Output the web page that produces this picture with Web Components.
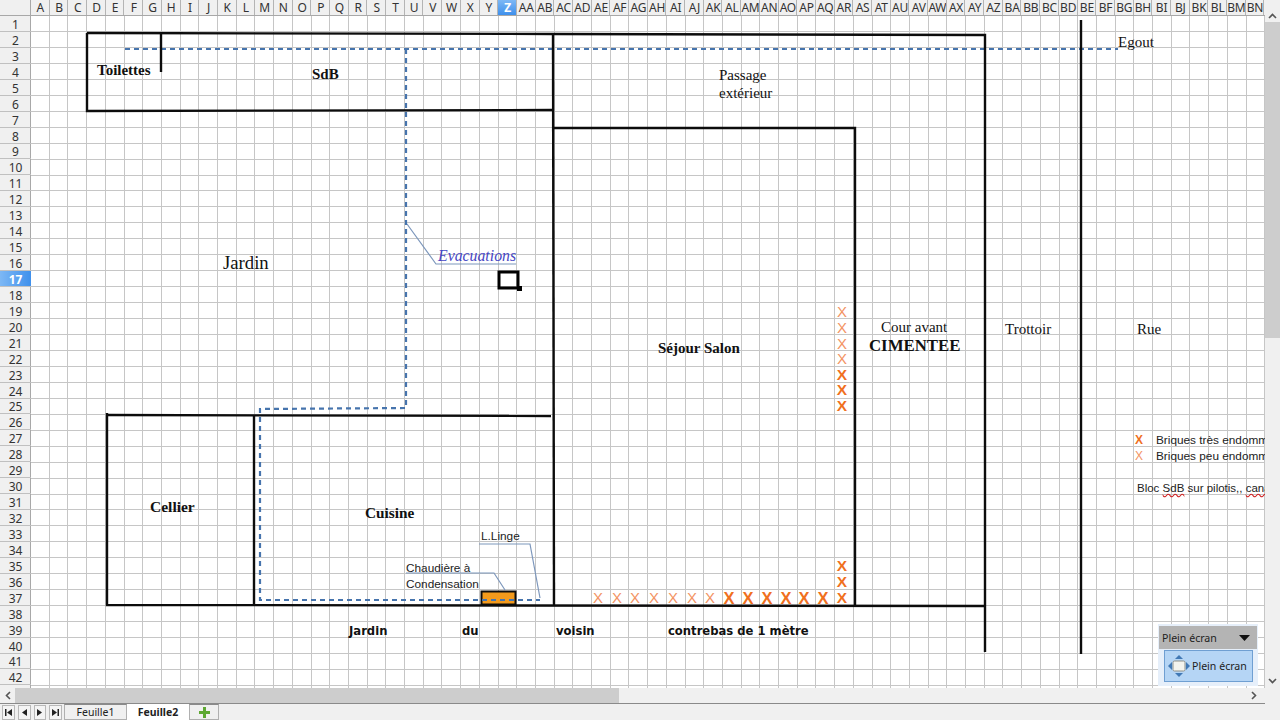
<!DOCTYPE html>
<html lang="fr">
<head>
<meta charset="utf-8">
<title>Feuille2</title>
<style>
  html, body { margin: 0; padding: 0; overflow: hidden; background: #f0f0f0; }
  .serif { font-family: "Liberation Serif", serif; color: #111; }
  .sans { font-family: "Liberation Sans", sans-serif; color: #222; }
  .wide { font: bold 11.6px "DejaVu Sans", sans-serif; color: #111; }
</style>
</head>
<body>
<calc-app>
  <sheet-label class="serif" x="97" y="70" style="font-size:15px;font-weight:bold">Toilettes</sheet-label>
  <sheet-label class="serif" x="312" y="74" style="font-size:15px;font-weight:bold">SdB</sheet-label>
  <sheet-label class="serif" x="719" y="75" style="font-size:15px">Passage</sheet-label>
  <sheet-label class="serif" x="719" y="93" style="font-size:15px">extérieur</sheet-label>
  <sheet-label class="serif" x="223" y="263" style="font-size:18.7px">Jardin</sheet-label>
  <sheet-label class="serif" x="438" y="256" style="font-size:15.8px;font-style:italic;color:#4646c4">Evacuations</sheet-label>
  <sheet-label class="serif" x="658" y="348" style="font-size:15px;font-weight:bold">Séjour Salon</sheet-label>
  <sheet-label class="serif" x="881" y="327" style="font-size:15px">Cour avant</sheet-label>
  <sheet-label class="serif" x="869" y="346" style="font-size:16.8px;font-weight:bold">CIMENTEE</sheet-label>
  <sheet-label class="serif" x="1005" y="329" style="font-size:15px">Trottoir</sheet-label>
  <sheet-label class="serif" x="1137" y="329" style="font-size:15px">Rue</sheet-label>
  <sheet-label class="serif" x="1118" y="42" style="font-size:15px">Egout</sheet-label>
  <sheet-label class="serif" x="150" y="507" style="font-size:15.5px;font-weight:bold">Cellier</sheet-label>
  <sheet-label class="serif" x="365" y="513" style="font-size:15.3px;font-weight:bold">Cuisine</sheet-label>
  <sheet-label class="wide" x="349" y="632">Jardin</sheet-label>
  <sheet-label class="wide" x="462" y="632">du</sheet-label>
  <sheet-label class="wide" x="556" y="632">voisin</sheet-label>
  <sheet-label class="wide" x="668" y="632">contrebas de 1 mètre</sheet-label>
  <sheet-label class="sans" x="481" y="536" style="font-size:11.8px">L.Linge</sheet-label>
  <sheet-label class="sans" x="406" y="568" style="font-size:11.8px">Chaudière à</sheet-label>
  <sheet-label class="sans" x="406" y="584" style="font-size:11.8px">Condensation</sheet-label>
  <sheet-label class="sans" x="1156" y="440" style="font-size:11.8px">Briques très endommagées</sheet-label>
  <sheet-label class="sans" x="1156" y="456" style="font-size:11.8px">Briques peu endommagées</sheet-label>
  <sheet-label class="sans" x="1137" y="488" style="font-size:11.5px">Bloc <u style="text-decoration:underline wavy #d02020">SdB</u> sur pilotis,, <u style="text-decoration:underline wavy #d02020">canalisation</u></sheet-label>
</calc-app>

<script>
  const COL_W = 18.7;
  const ROW_H = 15.95;
  // colonnes A..Z, AA..AZ puis BA..BN
  const colLabel = i => i < 26 ? String.fromCharCode(65 + i)
    : (i < 52 ? 'A' : 'B') + String.fromCharCode(65 + (i % 26));

  class ColHeaders extends HTMLElement {
    constructor() {
      super();
      this.attachShadow({ mode: 'open' });
      let cells = '';
      for (let i = 0; i < 66; i++) {
        cells += `<span class="${i === 25 ? 'on' : ''}">${colLabel(i)}</span>`;
      }
      this.shadowRoot.innerHTML = `
        <style>
          :host { display: grid; grid-template-columns: repeat(66, ${COL_W}px); height: 16px; background: #f0f0f0; overflow: hidden;
                  font: 12px "Noto Sans", sans-serif; color: #333; box-shadow: inset 0 -1px #a8a8a8; }
          span { display: flex; justify-content: center; align-items: center; overflow: hidden; white-space: nowrap;
                 border-right: 1px solid #b4b4b4; height: 15px; box-sizing: border-box; line-height: 15px; letter-spacing: -0.2px; padding-left: 1px; }
          .on { background: linear-gradient(#7db8f5, #3f90ec); color: #fff; font-weight: bold; }
        </style>${cells}`;
    }
  }

  class RowHeaders extends HTMLElement {
    constructor() {
      super();
      this.attachShadow({ mode: 'open' });
      let cells = '';
      for (let i = 1; i <= 43; i++) {
        cells += `<span class="${i === 17 ? 'on' : ''}">${i}</span>`;
      }
      this.shadowRoot.innerHTML = `
        <style>
          :host { display: block; overflow: hidden; background: #f0f0f0; font: 12px "Noto Sans", sans-serif; color: #333;
                  box-shadow: inset -1px 0 #a8a8a8; }
          span { display: flex; justify-content: center; align-items: center; height: ${ROW_H}px; box-sizing: border-box;
                 border-bottom: 1px solid #c0c0c0; padding-top: 2px; }
          .on { background: linear-gradient(90deg, #7db8f5, #3f90ec); color: #fff; font-weight: bold; }
        </style>${cells}`;
    }
  }

  class SheetGrid extends HTMLElement {
    constructor() {
      super();
      this.attachShadow({ mode: 'open' });
      let lines = '';
      for (let i = 1; i <= 66; i++) {
        const x = Math.round(31 + i * COL_W) - 0.5;
        lines += `<line x1="${x}" y1="16" x2="${x}" y2="688"/>`;
      }
      for (let i = 1; i <= 42; i++) {
        const y = Math.round(16 + i * ROW_H) - 0.5;
        lines += `<line x1="31" y1="${y}" x2="1265" y2="${y}"/>`;
      }
      this.shadowRoot.innerHTML = `
        <style>
          :host { display: block; position: relative; overflow: hidden; background: #fff; }
          svg { position: absolute; left: 0; top: 0; }
          .cells line { stroke: #c6c6c6; stroke-width: 1; }
          .wall { stroke: #0c0c0c; stroke-width: 2.4; fill: none; }
          .pipe { stroke: #4674ad; stroke-width: 2.2; stroke-dasharray: 5 4; fill: none; }
          .lead { stroke: #7d97bc; stroke-width: 1.2; fill: none; }
        </style>
        <svg width="1234" height="672" viewBox="31 16 1234 672">
          <g class="cells">${lines}</g>
          <g class="lead">
            <polyline points="407,224 436,264 516,264"/>
            <polyline points="479,544 530,544 540,598"/>
            <polyline points="406,573 494,573 505,590"/>
          </g>
          <rect x="481.5" y="591.5" width="34" height="13" fill="#f39a1c" stroke="#0c0c0c" stroke-width="2"/>
          <g class="pipe">
            <path d="M125 49H1118"/>
            <path d="M406 49V408L260 409V600H540"/>
          </g>
          <g class="wall">
            <path d="M87 33L553 34L985 35V652"/>
            <path d="M87 33V111L553 110"/>
            <path d="M161 32V72"/>
            <path d="M553 33L554 606"/>
            <path d="M552 128H855V606"/>
            <path d="M1081 20V654"/>
            <path d="M107 415L551 416"/>
            <path d="M107 413V605L985 606"/>
            <path d="M254 416V605"/>
          </g>
          <!-- cellule active -->
          <rect x="499" y="272" width="19" height="16" fill="none" stroke="#000" stroke-width="3"/>
          <rect x="517" y="286" width="5" height="5" fill="#000"/>
        </svg>
        <slot></slot>`;
    }
  }

  class SheetLabel extends HTMLElement {
    constructor() {
      super();
      this.attachShadow({ mode: 'open' });
      this.shadowRoot.innerHTML = `
        <style>
          :host { position: absolute; display: block; white-space: nowrap; line-height: 16px; }
        </style><slot></slot>`;
    }
    connectedCallback() {
      // x / y en coordonnees de la fenetre, y = milieu de la ligne
      this.style.left = (this.getAttribute('x') - 31) + 'px';
      this.style.top = (this.getAttribute('y') - 16 - 8) + 'px';
    }
  }

  class SheetScrollbar extends HTMLElement {
    constructor() {
      super();
      this.attachShadow({ mode: 'open' });
      const vertical = this.getAttribute('orient') === 'v';
      this.shadowRoot.innerHTML = vertical ? `
        <style>
          :host { display: flex; flex-direction: column; align-items: stretch; background: #f0f0f0; height: 100%; }
          svg { display: block; margin: 0 auto; }
          .top { height: 22px; display: flex; flex-direction: column; justify-content: flex-end; padding-bottom: 3px; box-sizing: border-box; }
          .thumb { height: 316px; background: #cdcdcd; }
          .rest { flex: 1; display: flex; align-items: flex-end; padding-bottom: 4px; }
        </style>
        <div class="top"><svg width="9" height="6"><path d="M1 5L4.5 1.5L8 5" fill="none" stroke="#555" stroke-width="1.6"/></svg></div>
        <div class="thumb"></div>
        <div class="rest"><svg width="9" height="6"><path d="M1 1L4.5 4.5L8 1" fill="none" stroke="#555" stroke-width="1.6"/></svg></div>` : `
        <style>
          :host { display: flex; align-items: center; background: #f0f0f0; height: 16px; box-sizing: border-box; border-bottom: 1px solid #8a8a8a; }
          svg { display: block; }
          .start { width: 15px; display: flex; justify-content: center; }
          .thumb { width: 604px; height: 15px; background: #cdcdcd; }
          .rest { flex: 1; display: flex; justify-content: flex-end; padding-right: 8px; }
        </style>
        <div class="start"><svg width="6" height="9"><path d="M5 1L1.5 4.5L5 8" fill="none" stroke="#555" stroke-width="1.6"/></svg></div>
        <div class="thumb"></div>
        <div class="rest"><svg width="6" height="9"><path d="M1 1L4.5 4.5L1 8" fill="none" stroke="#555" stroke-width="1.6"/></svg></div>`;
    }
  }

  class SheetTabs extends HTMLElement {
    constructor() {
      super();
      this.attachShadow({ mode: 'open' });
      this.shadowRoot.innerHTML = `
        <style>
          :host { display: flex; align-items: stretch; height: 16px; background: #f0f0f0; font: 10.5px "Noto Sans", sans-serif; color: #222; }
          .nav { display: flex; gap: 3px; padding: 1px 2px 0 2px; width: 60px; }
          .nav span { width: 13px; height: 13px; border: 1px solid #b8b8b8; background: #f4f4f4; display: flex; align-items: center; justify-content: center; }
          .tab { display: flex; align-items: center; justify-content: center; box-sizing: border-box; border: 1px solid #b0b0b0; border-top-color: #8a8a8a; }
          .one { width: 63px; background: #f0f0f0; }
          .two { width: 62px; background: #fff; font-weight: bold; border: none; }
          .add { width: 30px; background: #f0f0f0; }
        </style>
        <div class="nav">
          <span><svg width="9" height="9"><path d="M1 1h1.5v7H1zM8 1v7L3 4.5z" fill="#222"/></svg></span>
          <span><svg width="9" height="9"><path d="M7 1v7L2 4.5z" fill="#222"/></svg></span>
          <span><svg width="9" height="9"><path d="M2 1v7L7 4.5z" fill="#222"/></svg></span>
          <span><svg width="9" height="9"><path d="M8 1h-1.5v7H8zM1 1v7l5-3.5z" fill="#222"/></svg></span>
        </div>
        <div class="tab one">Feuille1</div>
        <div class="tab two">Feuille2</div>
        <div class="tab add"><svg width="11" height="11"><path d="M4 0h3v4h4v3H7v4H4V7H0V4h4z" fill="#5ea832"/></svg></div>`;
    }
  }

  class FloatToolbar extends HTMLElement {
    constructor() {
      super();
      this.attachShadow({ mode: 'open' });
      this.shadowRoot.innerHTML = `
        <style>
          :host { position: absolute; left: 1158px; top: 624px; width: 100px; height: 62px; box-sizing: border-box; padding: 2px 2px 0 2px;
                  background: #e6effa; font: 10.6px "Noto Sans", sans-serif; color: #222; display: flex; flex-direction: column; }
          .title { height: 23px; background: #b4b4b4; display: flex; align-items: center; justify-content: space-between; padding: 0 7px 0 3px; flex: none; margin: 0 -1px; }
          .btn { margin: 1px 3px 0 4px; height: 32px; box-sizing: border-box; background: #b5d5f5; border: 1px solid #6f9fd2; display: flex; align-items: center; gap: 2px; padding-left: 3px; }
          svg { display: block; flex: none; }
        </style>
        <div class="title"><span>Plein écran</span><svg width="11" height="6"><path d="M0 0h11L5.5 6z" fill="#111"/></svg></div>
        <div class="btn">
          <svg width="22" height="22" viewBox="0 0 22 22">
            <path d="M11 0l4 4H7zM11 22l-4-4h8zM0 11l4-4v8zM22 11l-4 4V7z" fill="#4179b5"/>
            <rect x="5" y="6" width="12" height="10" rx="1.5" fill="#f4f4ee" stroke="#8f9088"/>
          </svg>
          <span>Plein écran</span>
        </div>`;
    }
  }

  class CalcApp extends HTMLElement {
    constructor() {
      super();
      this.attachShadow({ mode: 'open' });
      this.shadowRoot.innerHTML = `
        <style>
          :host { display: grid; position: relative; width: 1280px; height: 720px; overflow: hidden; background: #f0f0f0;
                  grid-template-columns: 31px 1234px 15px; grid-template-rows: 16px 672px 16px 16px; }
          .corner { background: #f0f0f0; box-shadow: inset -1px -1px #a8a8a8; }
          .vbar { grid-row: 1 / 3; grid-column: 3; }
          .hbar { grid-column: 1 / 3; grid-row: 3; }
          .tabs { grid-column: 1 / 4; grid-row: 4; }
        </style>
        <div class="corner"></div>
        <col-headers></col-headers>
        <sheet-scrollbar class="vbar" orient="v"></sheet-scrollbar>
        <row-headers></row-headers>
        <sheet-grid><slot></slot></sheet-grid>
        <sheet-scrollbar class="hbar" orient="h"></sheet-scrollbar>
        <sheet-tabs class="tabs"></sheet-tabs>
        <float-toolbar></float-toolbar>`;
    }
  }

  // les X de la legende et des murs : [centre x, milieu y, gras, taille]
  const marks = [[1139, 440, true, 12], [1139, 456, false, 12]];
  [312, 328, 344, 359].forEach(y => marks.push([842, y, false, 15]));
  [375, 390, 406, 566, 582, 598].forEach(y => marks.push([842, y, true, 15.5]));
  [598, 617, 635, 654, 673, 692, 710].forEach(x => marks.push([x, 598, false, 15]));
  [729, 748, 767, 786, 804, 823].forEach(x => marks.push([x, 598, true, 16.5]));
  const app = document.querySelector('calc-app');
  marks.forEach(([x, y, bold, size]) => {
    const el = document.createElement('sheet-label');
    el.textContent = 'X';
    el.setAttribute('x', x - size / 3);
    el.setAttribute('y', y);
    el.style.cssText = `font:${bold ? 'bold ' : ''}${size}px "Liberation Sans",sans-serif;color:${bold ? '#f0701e' : '#f39363'};line-height:16px`;
    app.appendChild(el);
  });

  customElements.define('col-headers', ColHeaders);
  customElements.define('row-headers', RowHeaders);
  customElements.define('sheet-grid', SheetGrid);
  customElements.define('sheet-label', SheetLabel);
  customElements.define('sheet-scrollbar', SheetScrollbar);
  customElements.define('sheet-tabs', SheetTabs);
  customElements.define('float-toolbar', FloatToolbar);
  customElements.define('calc-app', CalcApp);
</script>
</body>
</html>
